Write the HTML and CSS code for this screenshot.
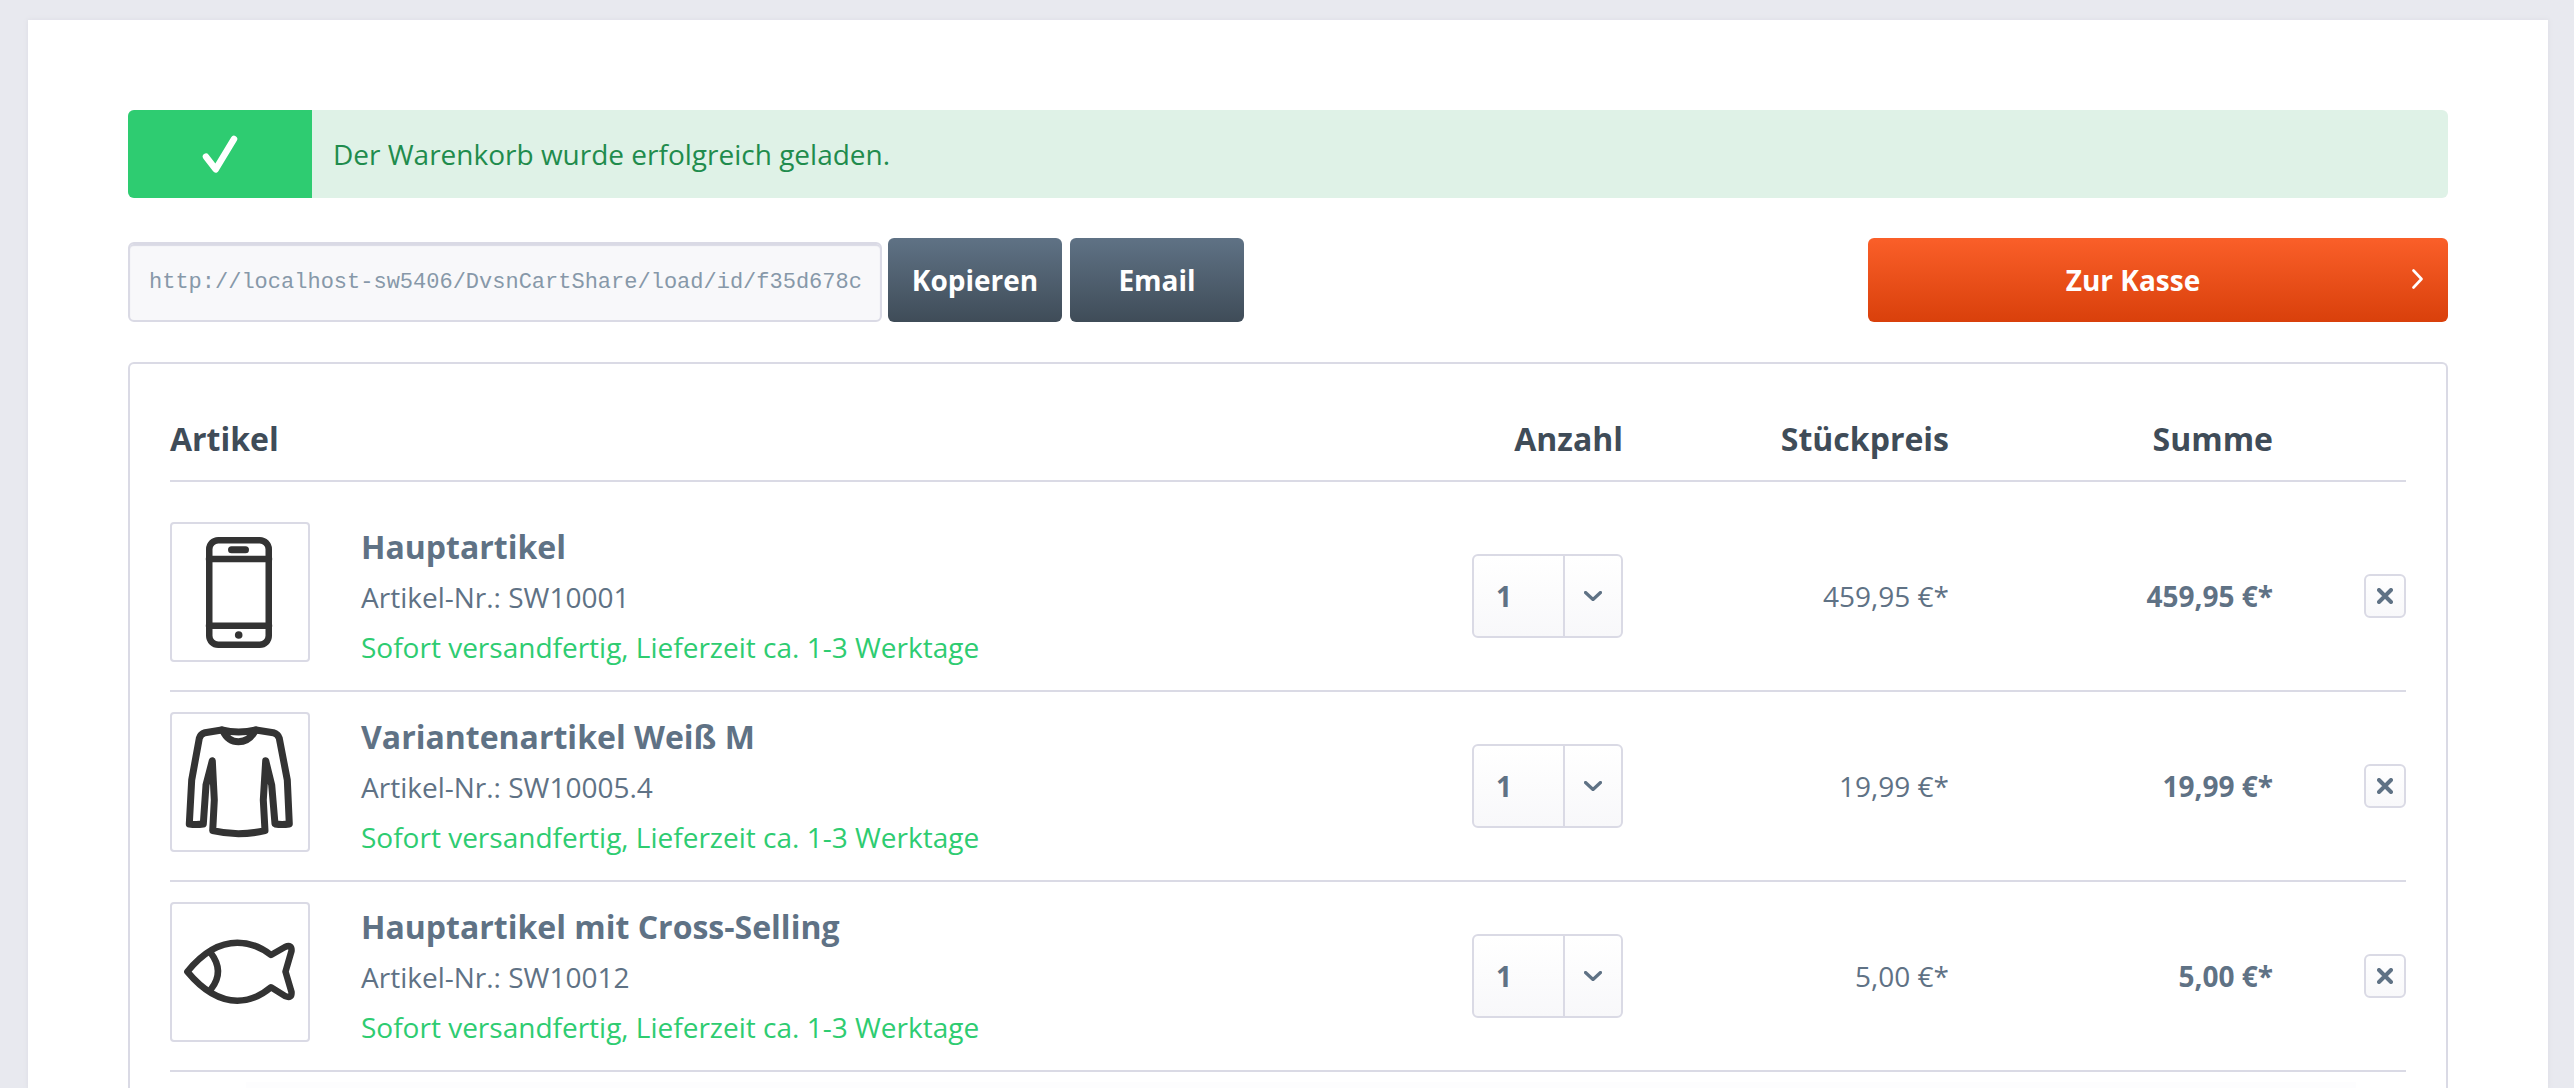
FILE: index.html
```html
<!DOCTYPE html>
<html lang="de">
<head>
<meta charset="utf-8">
<title>Warenkorb</title>
<link rel="stylesheet" href="styles.css">
</head>
<body>
<main class="panel">
  <div class="alert">
    <div class="alert-icon">
      <svg class="check" viewBox="0 0 40 40"><path d="M6 22.7 15.7 35.3 34 5"/></svg>
    </div>
    <p class="alert-text">Der Warenkorb wurde erfolgreich geladen.</p>
  </div>

  <div class="actions">
    <input class="share-url" type="text" readonly value="http://localhost-sw5406/DvsnCartShare/load/id/f35d678c">
    <button class="btn btn-copy">Kopieren</button>
    <button class="btn btn-email">Email</button>
    <button class="btn btn-checkout">Zur Kasse
      <svg class="chev-right" viewBox="0 0 11 20"><path d="M1.5 1.5 9.5 10 1.5 18.5"/></svg>
    </button>
  </div>

  <section class="cart">
    <div class="cart-row cart-head">
      <div>Artikel</div>
      <div class="right">Anzahl</div>
      <div class="right">Stückpreis</div>
      <div class="right">Summe</div>
      <div></div>
    </div>

    <div class="cart-row item first">
      <div class="info">
        <div class="thumb">
          <svg viewBox="0 0 136 136" class="thumb-svg">
            <rect x="37.25" y="16.25" width="59.5" height="104.5" rx="9"/>
            <path d="M37 35H97M37 101.7H97"/>
            <path class="thick" d="M59.5 25.7H73.5"/>
            <circle class="dot" cx="66.7" cy="111" r="3.8"/>
          </svg>
        </div>
        <div class="meta">
          <div class="title">Hauptartikel</div>
          <div class="sku">Artikel-Nr.: SW10001</div>
          <div class="delivery">Sofort versandfertig, Lieferzeit ca. 1-3 Werktage</div>
        </div>
      </div>
      <div class="qty"><span class="qty-val">1</span><span class="qty-arrow"><svg class="chev-down" viewBox="0 0 18 10"><path d="M1.5 1.5 9 8.5 16.5 1.5"/></svg></span></div>
      <div class="right price">459,95 €*</div>
      <div class="right total">459,95 €*</div>
      <div class="right cell-remove"><span class="remove"><svg class="x" viewBox="0 0 16 16"><path d="M2 2 14 14M14 2 2 14"/></svg></span></div>
    </div>

    <div class="cart-row item">
      <div class="info">
        <div class="thumb">
          <svg viewBox="0 0 136 136" class="thumb-svg shirt">
            <path d="M49.7 16 33 18.7Q28.5 20 27.3 24.3L19.7 66 17.3 110Q24 111 31.3 110L34 71 40.3 46.7 42.3 86 40.7 116.7Q66 122.7 93 116.7L91.3 86 93.7 46.7 99.7 71 103 110Q110 111 117.3 110L115.3 66 107.3 24.3Q106 20 101.3 18.7L84 16"/>
            <path d="M49.7 16Q66.5 20 84 16"/>
            <path d="M51 17Q56 27.7 66.5 27.7T83 17"/>
          </svg>
        </div>
        <div class="meta">
          <div class="title">Variantenartikel Weiß M</div>
          <div class="sku">Artikel-Nr.: SW10005.4</div>
          <div class="delivery">Sofort versandfertig, Lieferzeit ca. 1-3 Werktage</div>
        </div>
      </div>
      <div class="qty"><span class="qty-val">1</span><span class="qty-arrow"><svg class="chev-down" viewBox="0 0 18 10"><path d="M1.5 1.5 9 8.5 16.5 1.5"/></svg></span></div>
      <div class="right price">19,99 €*</div>
      <div class="right total">19,99 €*</div>
      <div class="right cell-remove"><span class="remove"><svg class="x" viewBox="0 0 16 16"><path d="M2 2 14 14M14 2 2 14"/></svg></span></div>
    </div>

    <div class="cart-row item">
      <div class="info">
        <div class="thumb">
          <svg viewBox="0 0 136 136" class="thumb-svg">
            <path d="M15.3 67.7C28 52 45 38.7 65.3 38.7 78 38.7 90 44 99 51L113 43Q120 40 119.5 47L113.5 67.7 119.5 88Q120 95 113 92L99 83.3C90 91 78 96.7 65.3 96.7 45 96.7 28 83 15.3 67.7Z"/>
            <path d="M39 49.3Q53 67.7 39 85.3"/>
          </svg>
        </div>
        <div class="meta">
          <div class="title">Hauptartikel mit Cross-Selling</div>
          <div class="sku">Artikel-Nr.: SW10012</div>
          <div class="delivery">Sofort versandfertig, Lieferzeit ca. 1-3 Werktage</div>
        </div>
      </div>
      <div class="qty"><span class="qty-val">1</span><span class="qty-arrow"><svg class="chev-down" viewBox="0 0 18 10"><path d="M1.5 1.5 9 8.5 16.5 1.5"/></svg></span></div>
      <div class="right price">5,00 €*</div>
      <div class="right total">5,00 €*</div>
      <div class="right cell-remove"><span class="remove"><svg class="x" viewBox="0 0 16 16"><path d="M2 2 14 14M14 2 2 14"/></svg></span></div>
    </div>

    <div class="next-row"></div>
  </section>
</main>
</body>
</html>
```
FILE: styles.css
```css
* { box-sizing: border-box; }

html, body {
  margin: 0;
  height: 1088px;
  overflow: hidden;
}

body {
  background: #e8e9ef;
  font-family: "Open Sans", sans-serif;
  font-size: 28px;
  color: #5f7285;
}

.panel {
  margin: 20px 26px 0 28px;
  padding: 90px 100px 0;
  height: 1068px;
  background: #fff;
  box-shadow: 0 0 4px 1px #e0e0e7;
}

.alert {
  display: flex;
  align-items: center;
  height: 88px;
  margin-bottom: 40px;
  border-radius: 6px;
  background: #dff2e7;
  overflow: hidden;
}

.alert-icon {
  display: flex;
  align-items: center;
  justify-content: center;
  width: 184px;
  height: 100%;
  background: #2ecc71;
}

.check {
  width: 40px;
  height: 40px;
  fill: none;
  stroke: #fff;
  stroke-width: 6.5;
  stroke-linecap: round;
  stroke-linejoin: round;
}

.alert-text {
  margin: 0 0 0 21px;
  color: #1f8c4d;
  line-height: 1;
}

.actions {
  display: flex;
  height: 84px;
  margin-bottom: 40px;
}

.share-url {
  width: 754px;
  height: 80px;
  margin: 4px 0 0;
  padding: 0 8px 0 19px;
  border: 2px solid #dadae5;
  border-radius: 6px;
  background: #f8f8fa;
  box-shadow: inset 0 2px 1px #dadae5;
  color: #8798a9;
  font-family: "Liberation Mono", monospace;
  font-size: 22px;
  outline: none;
}

.btn {
  height: 84px;
  padding: 0;
  border: 0;
  border-radius: 6px;
  background: linear-gradient(to bottom, #5f7285, #3f4c58);
  color: #fff;
  font-family: inherit;
  font-size: 28px;
  font-weight: 700;
}

.btn-copy { width: 174px; margin-left: 6px; }
.btn-email { width: 174px; margin-left: 8px; }

.btn-checkout {
  position: relative;
  width: 580px;
  margin-left: auto;
  padding-right: 50px;
  background: linear-gradient(to bottom, #fa5f29, #d9400b);
}

.chev-right {
  position: absolute;
  top: 31px;
  right: 25px;
  width: 11px;
  height: 20px;
  fill: none;
  stroke: #fff;
  stroke-width: 2.6;
  stroke-linecap: round;
  stroke-linejoin: round;
}

.cart {
  padding: 0 40px;
  height: 726px;
  border: 2px solid #dadae5;
  border-bottom: 0;
  border-radius: 6px 6px 0 0;
}

.cart-row {
  display: grid;
  grid-template-columns: 1302px 151px 326px 324px 133px;
  align-items: center;
  border-bottom: 2px solid #dadae5;
}

.right { text-align: right; }

.cart-head {
  height: 118px;
  padding-top: 32px;
  color: #3f4c58;
  font-size: 32px;
  font-weight: 700;
}

.item {
  height: 190px;
  padding: 20px 0 28px;
}

.item.first {
  height: 210px;
  padding-top: 40px;
}

.item > .qty,
.item > .price,
.item > .total,
.item > .cell-remove {
  margin-bottom: 2px;
}

.info {
  display: flex;
  align-items: flex-start;
  gap: 51px;
}

.thumb {
  width: 140px;
  height: 140px;
  flex: none;
  border: 2px solid #dadae5;
  border-radius: 4px;
}

.thumb-svg {
  display: block;
  width: 136px;
  height: 136px;
  fill: none;
  stroke: #333;
  stroke-width: 6.5;
  stroke-linecap: round;
  stroke-linejoin: round;
}

.thumb-svg.shirt { stroke-width: 7; }
.thumb-svg .thick { stroke-width: 7; }
.thumb-svg .dot { fill: #333; stroke: none; }

.meta { line-height: 50px; }
.title { font-size: 32px; font-weight: 700; }
.delivery { color: #2ecc71; }

.qty {
  display: flex;
  height: 84px;
  border: 2px solid #dadae5;
  border-radius: 6px;
  background: linear-gradient(to bottom, #fff, #f8f8fa);
  font-weight: 700;
}

.qty-val {
  display: flex;
  align-items: center;
  width: 89px;
  padding-left: 22px;
}

.qty-arrow {
  display: flex;
  flex: 1;
  align-items: center;
  justify-content: center;
  border-left: 2px solid #dadae5;
}

.chev-down {
  width: 18px;
  height: 10px;
  fill: none;
  stroke: #5f7285;
  stroke-width: 3.2;
  stroke-linecap: round;
  stroke-linejoin: round;
}

.total { font-weight: 700; }

.cell-remove { display: flex; justify-content: flex-end; }

.remove {
  display: flex;
  align-items: center;
  justify-content: center;
  width: 42px;
  height: 44px;
  border: 2px solid #dadae5;
  border-radius: 6px;
  background: linear-gradient(to bottom, #fff, #f8f8fa);
}

.x {
  width: 16px;
  height: 16px;
  fill: none;
  stroke: #5f7285;
  stroke-width: 4;
  stroke-linecap: round;
}

.next-row {
  height: 6px;
  margin: 10px 50px 0 76px;
  background: #fdfdfe;
}
```
